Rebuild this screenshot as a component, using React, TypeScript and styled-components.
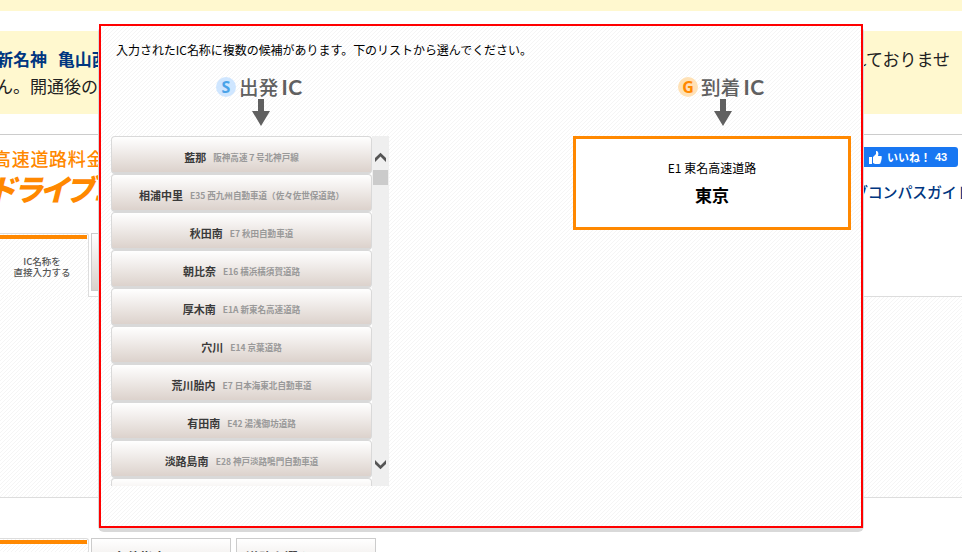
import React from "react";
import styled, { createGlobalStyle, css } from "styled-components";

const Global = createGlobalStyle`
  *{box-sizing:border-box}
  body{margin:0;background:#fff;font-family:"Noto Sans CJK JP",sans-serif;overflow:hidden;color:#222}
`;
const hatch = css`
  background-color: #fff;
  background-image: url("data:image/svg+xml,%3Csvg xmlns='http://www.w3.org/2000/svg' width='4' height='4' shape-rendering='crispEdges'%3E%3Cpath d='M3 0h1v1h-1zM2 1h1v1h-1zM1 2h1v1h-1zM0 3h1v1h-1z' fill='%23f5f5f5'/%3E%3C/svg%3E");
`;
const Page = styled.div`position:relative;width:962px;height:552px;overflow:hidden;display:flex;flex-direction:column;white-space:nowrap;`;
const TopStrip = styled.div`height:11px;background:#fff8cf;flex:none;`;
const Notice = styled.div`
  margin-top:20px;height:83px;flex:none;background:#fff8cf;padding-top:14px;
  font-size:17px;line-height:27px;
`;
const NoticeLine = styled.div`display:flex;justify-content:space-between;padding-right:12px;height:27px;`;
const NoticeStrong = styled.b`color:#003680;word-spacing:7px;margin-left:-4px;`;
const NoticeText = styled.span`margin-left:-4px;`;
const Header = styled.header`
  margin-top:20px;height:99px;flex:none;border-top:1px solid #ccc;display:flex;justify-content:space-between;
`;
const Brand = styled.div`color:#ff8800;padding-top:11px;margin-left:-2px;`;
const BrandSmall = styled.div`font-size:18px;line-height:24px;font-weight:500;letter-spacing:.7px;margin-left:-5px;`;
const BrandLarge = styled.div`
  font-size:30px;line-height:36px;font-weight:900;letter-spacing:-3.8px;
  transform:skewX(-14deg);transform-origin:left center;margin-left:-8px;
`;
const Aside = styled.div`display:flex;flex-direction:column;width:112px;padding-top:12px;`;
const Like = styled.div`
  width:108px;height:20px;background:#1877f2;border-radius:3px;color:#fff;display:flex;align-items:center;
  padding-left:19px;font-size:11px;font-weight:700;
`;
const LikeLabel = styled.span`margin-left:5px;width:48px;`;
const LikeCount = styled.span`font-family:"Liberation Sans",sans-serif;font-size:11px;`;
const Guide = styled.div`color:#003680;font-size:15px;line-height:24px;margin-top:13px;font-weight:500;letter-spacing:-.2px;margin-left:3px;`;
const Tabs = styled.div<{ $second?: boolean }>`
  display:flex;flex:none;height:64px;margin-top:${p => (p.$second ? 40 : 0)}px;
`;
const ActiveTab = styled.div`
  width:89px;height:64px;border:1px solid #ddd;border-width:1px 1px 0 0;border-radius:0 3px 0 0;padding:1px 1px 0 0;
  position:relative;z-index:1;${hatch}
`;
const ActiveTabBody = styled.div`
  border-top:4px solid #ff8800;height:62px;padding-top:17px;
  font-size:9.5px;line-height:11px;text-align:center;color:#555;font-weight:500;padding-right:3px;
`;
const TabLine = styled.div`height:11px;`;
const Tab = styled.div<{ $inset?: number }>`
  width:140px;height:58px;border:1px solid #ccc;background:linear-gradient(#fff,#d9d1cb);
  margin-left:2px;padding:9px 0 0 ${p => p.$inset ?? 0}px;font-size:13px;line-height:17px;font-weight:700;color:#444;
  & + &{margin-left:5px;}
`;
const Panel = styled.main`height:202px;flex:none;border:1px solid #ddd;border-width:1px 0;margin-top:-1px;${hatch}`;
const Dialog = styled.div`
  position:absolute;left:99px;top:24px;width:764px;height:504px;border:2px solid #f00;z-index:5;
  padding:0 10px;display:flex;flex-direction:column;${hatch}
`;
const Shadow = styled.div`
  position:absolute;left:98px;top:26px;width:766px;height:506px;background:#d9d9d9;border-radius:6px;z-index:4;
`;
const Message = styled.p`margin:14px 0 0 5px;height:20px;line-height:20px;font-size:12px;letter-spacing:-.04px;color:#000;`;
const Columns = styled.div`display:flex;justify-content:space-between;margin-top:16px;`;
const Column = styled.section`width:278px;`;
const Title = styled.div<{ $shift: number }>`
  display:flex;align-items:center;height:21px;margin-left:${p => p.$shift}px;color:#606060;font-size:19.5px;font-weight:500;
`;
const Badge = styled.span<{ $goal?: boolean }>`
  width:20px;height:20px;border-radius:50%;margin-right:3px;display:flex;align-items:center;justify-content:center;
  font:700 16px "Noto Sans",sans-serif;background:${p => (p.$goal ? "#ffe1b5" : "#cfe6ff")};color:${p => (p.$goal ? "#ff8800" : "#4aa3e8")};
`;
const TitleText = styled.span`letter-spacing:.2px;`;
const TitleLatin = styled.span`font-family:Lato,sans-serif;font-weight:700;font-size:21px;letter-spacing:.5px;margin-left:3px;`;
const Arrow = styled.svg<{ $shift: number }>`display:block;margin:2px 0 10px ${p => p.$shift}px;`;
const ListBox = styled.div`display:flex;height:350px;overflow:hidden;`;
const List = styled.div`width:261px;`;
const Item = styled.button`
  display:flex;align-items:center;justify-content:center;width:261px;height:38px;padding:5px 0 0;
  border:1px solid #d9d9d9;border-bottom-width:2px;border-radius:4px;background:linear-gradient(#fff,#dcd2cc);
  font-family:"Noto Sans CJK JP",sans-serif;
`;
const Name = styled.span`font-size:11px;font-weight:700;color:#3a3a3a;margin-right:7px;`;
const Road = styled.span`font-size:8.55px;font-weight:700;color:#999;`;
const Scroll = styled.div`
  width:17px;height:350px;background:#efefef;display:flex;flex-direction:column;align-items:center;padding-top:16px;
`;
const Thumb = styled.div`width:15px;height:15px;background:#cbcbcb;margin:8px 0 275px;`;
const Selected = styled.div`
  width:278px;height:94px;border:3px solid #ff8800;background:#fff;color:#000;text-align:center;padding-top:19px;
`;
const SelectedRoad = styled.div`font-size:12px;line-height:20px;`;
const SelectedName = styled.div`font-size:17px;line-height:25px;font-weight:700;margin-top:4px;`;

const DownArrow = ({ shift }: { shift: number }) => (
  <Arrow $shift={shift} width="18" height="27" viewBox="0 0 18 27"><path d="M6 0h6v12h6L9 27 0 12h6z" fill="#606060" /></Arrow>
);
const Chevron = ({ down }: { down?: boolean }) => (
  <svg width="12" height="10" viewBox="0 0 12 10"><path d={down ? "M0 0l5.5 5.5L11 0v4L5.5 9.3 0 4z" : "M0 10l5.5-5.5L11 10V6L5.5.7 0 6z"} fill="#555" /></svg>
);
const items = [
  ["藍那", "阪神高速７号北神戸線"], ["相浦中里", "E35 西九州自動車道（佐々佐世保道路）"], ["秋田南", "E7 秋田自動車道"],
  ["朝比奈", "E16 横浜横須賀道路"], ["厚木南", "E1A 新東名高速道路"], ["穴川", "E14 京葉道路"],
  ["荒川胎内", "E7 日本海東北自動車道"], ["有田南", "E42 湯浅御坊道路"], ["淡路島南", "E28 神戸淡路鳴門自動車道"], ["", ""],
];

export default function App() {
  return (
    <Page>
      <Global />
      <TopStrip />
      <Notice>
        <NoticeLine><NoticeStrong>新名神 亀山西</NoticeStrong><span>れておりませ</span></NoticeLine>
        <NoticeLine><NoticeText>ん。開通後の道</NoticeText></NoticeLine>
      </Notice>
      <Header>
        <Brand><BrandSmall>高速道路料金</BrandSmall><BrandLarge>ドライブコ</BrandLarge></Brand>
        <Aside>
          <Like>
            <svg width="13" height="13" viewBox="0 0 13 13" fill="#fff"><path d="M0 6h3v7H0zM4 6l3-3V0c2 0 3 2 2 5h3c1 0 1 1 .6 2 .3 1 0 1.5-.4 2 .2 1 0 1.5-.5 2 0 1-.4 2-1.7 2H6l-2-1z" /></svg>
            <LikeLabel>いいね！</LikeLabel><LikeCount>43</LikeCount>
          </Like>
          <Guide>ブコンパスガイド</Guide>
        </Aside>
      </Header>
      <Tabs>
        <ActiveTab><ActiveTabBody><TabLine>IC名称を</TabLine><TabLine>直接入力する</TabLine></ActiveTabBody></ActiveTab>
        <Tab />
      </Tabs>
      <Panel />
      <Tabs $second>
        <ActiveTab><ActiveTabBody /></ActiveTab>
        <Tab $inset={22}>条件指定</Tab>
        <Tab $inset={9}>道路を選んで</Tab>
      </Tabs>
      <Shadow />
      <Dialog>
        <Message>入力されたIC名称に複数の候補があります。下のリストから選んでください。</Message>
        <Columns>
          <Column>
            <Title $shift={105}><Badge>S</Badge><TitleText>出発</TitleText><TitleLatin>IC</TitleLatin></Title>
            <DownArrow shift={141} />
            <ListBox>
              <List>{items.map(([n, r], i) => <Item key={i}><Name>{n}</Name><Road>{r}</Road></Item>)}</List>
              <Scroll><Chevron /><Thumb /><Chevron down /></Scroll>
            </ListBox>
          </Column>
          <Column>
            <Title $shift={105}><Badge $goal>G</Badge><TitleText>到着</TitleText><TitleLatin>IC</TitleLatin></Title>
            <DownArrow shift={141} />
            <Selected><SelectedRoad>E1 東名高速道路</SelectedRoad><SelectedName>東京</SelectedName></Selected>
          </Column>
        </Columns>
      </Dialog>
    </Page>
  );
}
